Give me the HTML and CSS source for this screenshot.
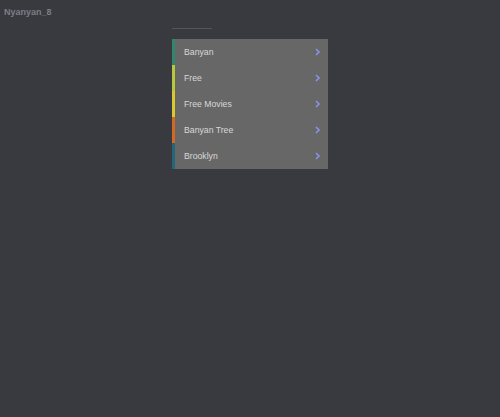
FILE: index.html
```html
<!DOCTYPE html>
<html>
<head>
<meta charset="utf-8">
<link rel="stylesheet" href="styles.css">
</head>
<body>
<div class="page">
  <div class="brand">Nyanyan_8</div>
  <div class="panel">
    <div class="label"></div>
    <ul class="list">
      <li class="item c-green"><span>Banyan</span><svg class="chev" viewBox="0 0 5 8" width="5" height="8"><path d="M1 1 L4 4 L1 7" fill="none" stroke="currentColor" stroke-width="1.6"/></svg></li>
      <li class="item c-lime"><span>Free</span><svg class="chev" viewBox="0 0 5 8" width="5" height="8"><path d="M1 1 L4 4 L1 7" fill="none" stroke="currentColor" stroke-width="1.6"/></svg></li>
      <li class="item c-yellow"><span>Free Movies</span><svg class="chev" viewBox="0 0 5 8" width="5" height="8"><path d="M1 1 L4 4 L1 7" fill="none" stroke="currentColor" stroke-width="1.6"/></svg></li>
      <li class="item c-orange"><span>Banyan Tree</span><svg class="chev" viewBox="0 0 5 8" width="5" height="8"><path d="M1 1 L4 4 L1 7" fill="none" stroke="currentColor" stroke-width="1.6"/></svg></li>
      <li class="item c-teal"><span>Brooklyn</span><svg class="chev" viewBox="0 0 5 8" width="5" height="8"><path d="M1 1 L4 4 L1 7" fill="none" stroke="currentColor" stroke-width="1.6"/></svg></li>
    </ul>
  </div>
</div>
</body>
</html>
```
FILE: styles.css
```css
html, body {
  margin: 0;
  padding: 0;
  background: #383a40;
  font-family: "Liberation Sans", Arial, sans-serif;
}
.page {
  width: 500px;
  height: 417px;
  background: #383a40;
}
.brand {
  padding: 7px 4px 0 4px;
  height: 21px;
  box-sizing: border-box;
  font-size: 9px;
  font-weight: bold;
  color: #7c7e86;
  line-height: 11px;
}
.panel {
  width: 156px;
  margin: 0 auto;
}
.label {
  width: 40px;
  height: 1px;
  margin-top: 7px;
  margin-bottom: 10px;
  background: #52555c;
}
.list {
  list-style: none;
  margin: 0;
  padding: 0;
  background: #676767;
}
.item {
  height: 26px;
  display: flex;
  align-items: center;
  justify-content: space-between;
  padding: 0 8px 0 9px;
  border-left: 3px solid #3a8a70;
  font-size: 8.7px;
  color: #d8d8d8;
}
.chev {
  color: #8c90e0;
  display: block;
}
.c-green { border-left-color: #32866c; }
.c-lime { border-left-color: #b9c83a; }
.c-yellow { border-left-color: #d9c92e; }
.c-orange { border-left-color: #d06a22; }
.c-teal { border-left-color: #25657a; }
```
